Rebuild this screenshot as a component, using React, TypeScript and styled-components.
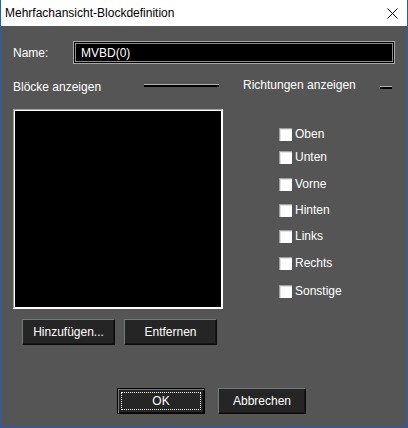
import React from "react";
import styled, { createGlobalStyle } from "styled-components";

const Global = createGlobalStyle`
  html, body { margin: 0; padding: 0; background: #555555; }
  * { box-sizing: border-box; }
  body { font-family: "Segoe UI", "Liberation Sans", Arial, sans-serif; font-size: 12px; }
`;

const Window = styled.div`
  width: 408px;
  height: 428px;
  display: flex;
  flex-direction: column;
  border: 1px solid #1c5fc0;
  border-top: none;
  background: #555555;
`;

const TitleBar = styled.div`
  height: 26px;
  flex: none;
  background: #ffffff;
  display: flex;
  align-items: center;
  justify-content: space-between;
  padding: 0 9px 0 4px;
`;

const Title = styled.span`
  color: #000;
  font-size: 12px;
  line-height: 16px;
`;

const Body = styled.div`
  flex: 1;
  display: flex;
  flex-direction: column;
  padding: 15px 12px 0 12px;
  color: #ffffff;
`;

const NameRow = styled.div`
  display: flex;
  align-items: center;
  height: 23px;
`;

const Label = styled.span<{ $shift?: number }>`
  font-size: 12px;
  line-height: 16px;
  color: #ffffff;
  white-space: nowrap;
  position: relative;
  top: ${(p) => p.$shift ?? 0}px;
`;

const NameLabel = styled(Label)`
  width: 60px;
  flex: none;
`;

const NameInput = styled.div`
  width: 322px;
  height: 23px;
  border: 1px solid #a8a8a8;
  background: #000;
  box-shadow: inset 0 0 0 1px #000, inset 0 0 0 2px #8c8c8c;
  display: flex;
  align-items: center;
  padding-left: 7px;
  font-size: 12px;
  color: #ffffff;
`;

const MainGrid = styled.div`
  display: grid;
  grid-template-columns: 210px 1fr;
  grid-template-rows: 16px auto;
  column-gap: 20px;
  row-gap: 15px;
  margin-top: 14px;
`;

const Header = styled.div<{ $lineRight: number }>`
  display: flex;
  align-items: center;
  justify-content: space-between;
  padding-right: ${(p) => p.$lineRight}px;
`;

const Separator = styled.div<{ $w: number; $shift?: number }>`
  width: ${(p) => p.$w}px;
  height: 3px;
  background: #000;
  border-top: 1px solid #b0b0b0;
  position: relative;
  top: ${(p) => p.$shift ?? 0}px;
`;

const ListBox = styled.div`
  width: 210px;
  height: 200px;
  background: #000;
  border-top: 1px solid #a0a0a0;
  border-left: 1px solid #a0a0a0;
  border-right: 2px solid #ffffff;
  border-bottom: 2px solid #ffffff;
  box-shadow: inset 1px 1px 0 #ffffff;
`;

const CheckColumn = styled.div`
  display: flex;
  flex-direction: column;
  padding-left: 36px;
`;

const CheckRow = styled.label<{ $top: number }>`
  display: flex;
  align-items: center;
  gap: 3px;
  height: 13px;
  margin-top: ${(p) => p.$top}px;
  font-size: 12px;
  line-height: 13px;
  color: #ffffff;
`;

const Box = styled.span`
  width: 13px;
  height: 13px;
  flex: none;
  background: #ffffff;
  border-top: 1px solid #a0a0a0;
  border-left: 1px solid #a0a0a0;
  box-shadow: inset 1px 1px 0 #e3e3e3;
`;

const ButtonRow = styled.div<{ $top: number; $left: number; $gap: number }>`
  display: flex;
  gap: ${(p) => p.$gap}px;
  margin-top: ${(p) => p.$top}px;
  padding-left: ${(p) => p.$left}px;
`;

const Button = styled.button<{ $w: number; $default?: boolean }>`
  width: ${(p) => p.$w}px;
  height: 26px;
  padding: 0;
  font-family: "Segoe UI", "Liberation Sans", Arial, sans-serif;
  font-size: 12px;
  color: #ffffff;
  background: #252525;
  border: 1px solid;
  border-color: ${(p) =>
    p.$default ? "#000 #000 #000 #000" : "#727b7b #0c0c0c #0c0c0c #727b7b"};
  box-shadow: ${(p) =>
    p.$default
      ? "inset 1px 1px 0 #727b7b, inset -1px -1px 0 #0c0c0c"
      : "inset -1px -1px 0 #161616"};
  outline: ${(p) => (p.$default ? "1px dotted #ffffff" : "none")};
  outline-offset: -5px;
`;

const checks = [
  { label: "Oben", top: 19 },
  { label: "Unten", top: 10 },
  { label: "Vorne", top: 14 },
  { label: "Hinten", top: 13 },
  { label: "Links", top: 13 },
  { label: "Rechts", top: 14 },
  { label: "Sonstige", top: 15 },
];

export default function App() {
  return (
    <>
      <Global />
      <Window>
        <TitleBar>
          <Title>Mehrfachansicht-Blockdefinition</Title>
          <svg width="11" height="11" viewBox="0 0 11 11">
            <path d="M0.5 0.5 L10.5 10.5 M10.5 0.5 L0.5 10.5" stroke="#000" strokeWidth="1" />
          </svg>
        </TitleBar>
        <Body>
          <NameRow>
            <NameLabel>Name:</NameLabel>
            <NameInput>MVBD(0)</NameInput>
          </NameRow>
          <MainGrid>
            <Header $lineRight={4}>
              <Label $shift={1}>Blöcke anzeigen</Label>
              <Separator $w={75} $shift={-1} />
            </Header>
            <Header $lineRight={3}>
              <Label $shift={-1}>Richtungen anzeigen</Label>
              <Separator $w={12} $shift={1} />
            </Header>
            <ListBox />
            <CheckColumn>
              {checks.map((c) => (
                <CheckRow key={c.label} $top={c.top}>
                  <Box />
                  {c.label}
                </CheckRow>
              ))}
            </CheckColumn>
          </MainGrid>
          <ButtonRow $top={10} $left={9} $gap={9}>
            <Button $w={93}>Hinzufügen...</Button>
            <Button $w={93}>Entfernen</Button>
          </ButtonRow>
          <ButtonRow $top={43} $left={104} $gap={13}>
            <Button $w={88} $default>OK</Button>
            <Button $w={88}>Abbrechen</Button>
          </ButtonRow>
        </Body>
      </Window>
    </>
  );
}
